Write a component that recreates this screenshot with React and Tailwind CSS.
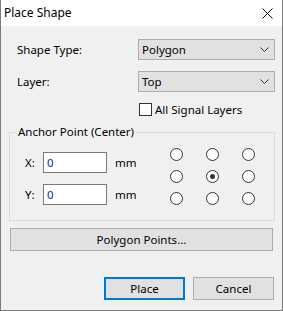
import { useState } from 'react';

function Combo({ value }) {
  return (
    <div className="w-[137px] h-[21px] bg-[#e1e1e1] border border-[#adadad] flex items-center justify-between pl-[3px] pr-[4px]">
      <span>{value}</span>
      <svg width="9" height="5" viewBox="0 0 9 5" className="mr-[1px]">
        <polyline points="0.5,0.5 4.5,4.5 8.5,0.5" fill="none" stroke="#333" strokeWidth="1" />
      </svg>
    </div>
  );
}

function Radio({ checked }) {
  return (
    <div className="w-[13px] h-[13px] rounded-full border border-[#333] bg-white flex items-center justify-center">
      {checked && <div className="w-[5px] h-[5px] rounded-full bg-[#333]" />}
    </div>
  );
}

function Field({ label }) {
  return (
    <div className="flex items-center h-[21px]">
      <span className="w-[18px]">{label}</span>
      <div className="w-[64px] h-[21px] bg-white border border-[#7a7a7a] flex items-center pl-[3px] text-[#1c1ca8]">
        0
      </div>
      <span className="ml-[8px]">mm</span>
    </div>
  );
}

export default function App() {
  const [anchor] = useState(4);

  return (
    <div
      className="w-[283px] h-[311px] border border-t-0 border-[#7a7a7a] flex flex-col text-[11.5px] text-black"
      style={{ fontFamily: '"Noto Sans", "Open Sans", sans-serif' }}
    >
      {/* Title bar */}
      <div className="h-[26px] bg-white flex items-center justify-between pl-[3px] pr-[9px] shrink-0 text-[12px]">
        <span>Place Shape</span>
        <svg width="11" height="11" viewBox="0 0 11 11">
          <path d="M0.5 0.5 L10.5 10.5 M10.5 0.5 L0.5 10.5" stroke="#000" strokeWidth="1" />
        </svg>
      </div>

      {/* Body */}
      <div className="flex-1 bg-[#f0f0f0] flex flex-col pl-[8px] pr-[7px]">
        <div className="flex items-center mt-[13px]">
          <span className="w-[129px] shrink-0 pl-[8px]">Shape Type:</span>
          <Combo value="Polygon" />
        </div>
        <div className="flex items-center mt-[11px]">
          <span className="w-[129px] shrink-0 pl-[8px]">Layer:</span>
          <Combo value="Top" />
        </div>
        <div className="flex items-center mt-[11px] h-[13px]">
          <div className="w-[130px] shrink-0" />
          <div className="w-[13px] h-[13px] shrink-0 bg-white border border-[#333]" />
          <span className="ml-[3px] whitespace-nowrap">All Signal Layers</span>
        </div>

        <fieldset className="mt-[8px] border border-[#dcdcdc] h-[97px]">
          <legend className="ml-[6px] px-[2px] leading-[16px]">Anchor Point (Center)</legend>
          <div className="flex pl-[15px] pt-[12px]">
            <div className="flex flex-col gap-[11px]">
              <Field label="X:" />
              <Field label="Y:" />
            </div>
            <div className="grid grid-cols-3 gap-x-[23px] gap-y-[9px] ml-[33px] -mt-[4px]">
              {Array.from({ length: 9 }).map((_, i) => (
                <Radio key={i} checked={i === anchor} />
              ))}
            </div>
          </div>
        </fieldset>

        <button className="mt-[7px] ml-[1px] w-[263px] h-[23px] bg-[#e1e1e1] border border-[#adadad]">
          Polygon Points...
        </button>

        <div className="flex justify-end gap-[8px] mt-[26px] pr-[1px]">
          <button className="w-[81px] h-[23px] bg-[#e1e1e1] border-2 border-[#0078d7]">Place</button>
          <button className="w-[81px] h-[23px] bg-[#e1e1e1] border border-[#adadad]">Cancel</button>
        </div>
      </div>
    </div>
  );
}
